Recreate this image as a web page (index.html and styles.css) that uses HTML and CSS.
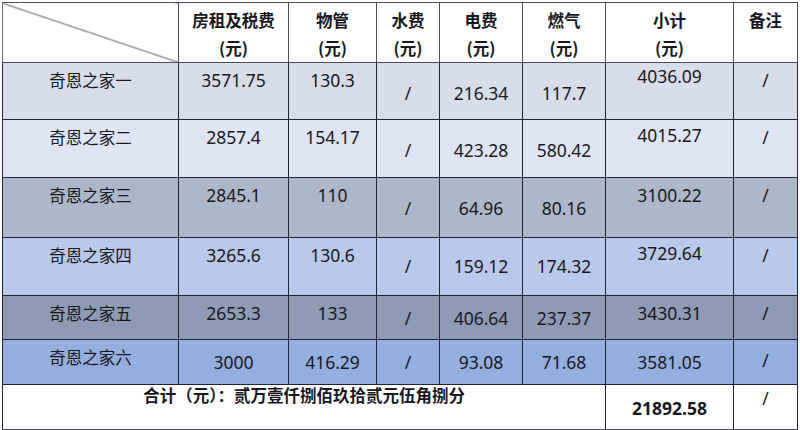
FILE: index.html
```html
<!DOCTYPE html>
<html lang="zh-CN">
<head>
<meta charset="utf-8">
<title>费用明细</title>
<link rel="stylesheet" href="styles.css">
</head>
<body>
<table class="sheet">
  <colgroup>
    <col class="c-name"><col class="c-rent"><col class="c-prop"><col class="c-water"><col class="c-elec"><col class="c-gas"><col class="c-sub"><col class="c-note">
  </colgroup>
  <thead>
    <tr class="r-head">
      <th class="diag"></th>
      <th>房租及税费<br>(元)</th>
      <th>物管<br>(元)</th>
      <th>水费<br>(元)</th>
      <th>电费<br>(元)</th>
      <th>燃气<br>(元)</th>
      <th>小计<br>(元)</th>
      <th>备注</th>
    </tr>
  </thead>
  <tbody>
    <tr class="r1">
      <td>奇恩之家一</td><td>3571.75</td><td>130.3</td>
      <td class="low">/</td><td class="low">216.34</td><td class="low">117.7</td>
      <td class="hi">4036.09</td><td class="nt">/</td>
    </tr>
    <tr class="r2">
      <td>奇恩之家二</td><td>2857.4</td><td>154.17</td>
      <td class="low">/</td><td class="low">423.28</td><td class="low">580.42</td>
      <td class="hi2">4015.27</td><td class="nt">/</td>
    </tr>
    <tr class="r3">
      <td>奇恩之家三</td><td>2845.1</td><td>110</td>
      <td class="low">/</td><td class="low">64.96</td><td class="low">80.16</td>
      <td>3100.22</td><td class="nt">/</td>
    </tr>
    <tr class="r4">
      <td>奇恩之家四</td><td>3265.6</td><td>130.6</td>
      <td class="low2">/</td><td class="low2">159.12</td><td class="low2">174.32</td>
      <td class="hi2">3729.64</td><td class="nt">/</td>
    </tr>
    <tr class="r5">
      <td>奇恩之家五</td><td>2653.3</td><td>133</td>
      <td class="low3">/</td><td class="low3">406.64</td><td class="low3">237.37</td>
      <td>3430.31</td><td class="nt">/</td>
    </tr>
    <tr class="r6">
      <td>奇恩之家六</td><td class="low3">3000</td><td class="low3">416.29</td>
      <td class="low3">/</td><td class="low3">93.08</td><td class="low3">71.68</td>
      <td class="low3">3581.05</td><td class="nt2">/</td>
    </tr>
    <tr class="r-total">
      <td colspan="6" class="sum-label">合计（元）：贰万壹仟捌佰玖拾贰元伍角捌分</td>
      <td class="sum-val">21892.58</td>
      <td class="sum-note">/</td>
    </tr>
  </tbody>
</table>
</body>
</html>
```
FILE: styles.css
```css
html, body {
  margin: 0;
  padding: 0;
  background: #ffffff;
}
body {
  padding: 2px 0 0 2px;
  font-family: "Noto Sans", "Noto Sans CJK SC", sans-serif;
  color: #18181c;
}
.sheet {
  table-layout: fixed;
  border-collapse: collapse;
  width: 795px;
  border: 1px solid #6a6a70;
}
.c-name { width: 176px; }
.c-rent { width: 110px; }
.c-prop { width: 88px; }
.c-water { width: 63px; }
.c-elec { width: 83px; }
.c-gas { width: 83px; }
.c-sub { width: 128px; }
.c-note { width: 64px; }

.sheet th,
.sheet td {
  border: 1px solid #1f2436;
  padding: 7px 0 0 0;
  text-align: center;
  vertical-align: top;
  font-size: 17.5px;
  line-height: 20px;
  font-weight: 400;
  overflow: hidden;
  white-space: nowrap;
}
.sheet th {
  font-family: "Noto Sans CJK SC", sans-serif;
  font-size: 16.5px;
  font-weight: 700;
  line-height: 28px;
  padding-top: 3px;
  border-color: #4a4d58;
}
.r-head { height: 56px; }
.r-head th:first-child { border-left-color: #6a6a70; }
.diag {
  background: linear-gradient(to top right, transparent calc(50% - 0.9px), #4a4f5c 50%, transparent calc(50% + 0.9px));
}
.sheet td:first-child {
  font-family: "Noto Sans CJK SC", sans-serif;
  font-size: 16.5px;
}

.r1 { height: 57px; background: #d7dde9; }
.r2 { height: 58px; background: #dfe5f5; }
.r3 { height: 60px; background: #adb7ca; }
.r4 { height: 58px; background: #b9c9ea; }
.r5 { height: 44px; background: #8d9bb5; }
.r6 { height: 45px; background: #95aee0; }
.r-total { height: 45px; background: #ffffff; }

.sheet td.low { padding-top: 20px; }
.sheet td.low2 { padding-top: 18px; }
.sheet td.low3 { padding-top: 12px; }
.sheet td.hi { padding-top: 3px; }
.sheet td.hi2 { padding-top: 5px; }
.sheet td.nt { padding-top: 7px; }
.sheet td.nt2 { padding-top: 10px; }

.sheet td.sum-label {
  font-family: "Noto Sans CJK SC", sans-serif;
  font-size: 16.5px;
  font-weight: 700;
  padding-top: 0;
}
.sheet td.sum-val {
  font-weight: 700;
  padding-top: 13px;
}
.sheet td.sum-note { padding-top: 3px; }
.r-total td { border-bottom-color: #4a4d58; }
```
